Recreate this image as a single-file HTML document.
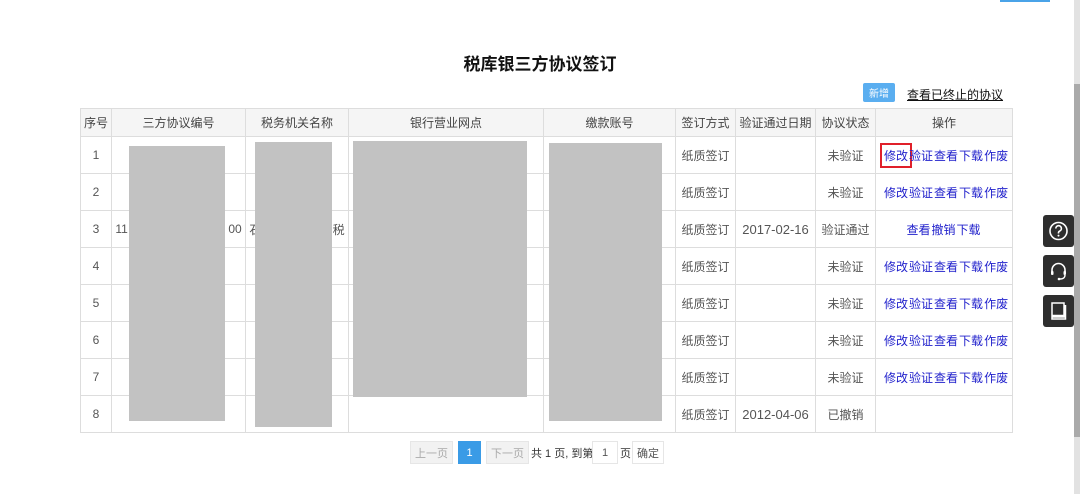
<!DOCTYPE html>
<html><head><meta charset="utf-8"><style>
*{margin:0;padding:0;box-sizing:border-box}
body{width:1080px;height:494px;background:#fff;position:relative;overflow:hidden;font-family:"Liberation Sans","Noto Sans CJK SC",sans-serif;font-size:12px;color:#555}
.a{position:absolute}
table{position:absolute;left:80px;top:108px;border-collapse:collapse;table-layout:fixed;width:932px}
td,th{border:1px solid #ddd;text-align:center;height:37px;font-weight:normal;color:#555;font-size:12px;white-space:nowrap;overflow:hidden}
th{background:#f5f5f5;height:28px;color:#444}
td.op{color:#2222cc;font-size:12px;text-align:left;padding-left:8px}
td.op span{display:inline-block;margin-right:1px}
.g{position:absolute;background:#c2c2c2}
.ic{position:absolute;left:1043px;width:31px;height:32px;background:#2e2e2e;border-radius:3px}
.pb{position:absolute;top:441px;height:23px;border:1px solid #e6e6e6;background:#f2f2f2;color:#aaa;font-size:11px;display:flex;align-items:center;justify-content:center}
.pt{position:absolute;top:441px;height:23px;font-size:11px;color:#333;display:flex;align-items:center}
</style></head><body>
<div class="a" style="left:1000px;top:0;width:50px;height:2px;background:#4aa3e8"></div>
<div class="a" style="left:1074px;top:0;width:6px;height:494px;background:#e2e2e2"></div>
<div class="a" style="left:1074px;top:84px;width:6px;height:353px;background:#aaa"></div>
<div class="a" style="left:0;top:50px;width:1080px;text-align:center;font-size:17px;font-weight:bold;color:#111">税库银三方协议签订</div>
<div class="a" style="left:863px;top:83px;width:32px;height:19px;background:#5aaef0;color:#fff;font-size:10px;display:flex;align-items:center;justify-content:center;border-radius:2px">新增</div>
<div class="a" style="left:907px;top:86px;font-size:12px;color:#111;text-decoration:underline">查看已终止的协议</div>
<table>
<colgroup><col style="width:31px"><col style="width:134px"><col style="width:103px"><col style="width:195px"><col style="width:132px"><col style="width:60px"><col style="width:80px"><col style="width:60px"><col style="width:137px"></colgroup>
<tr><th>序号</th><th>三方协议编号</th><th>税务机关名称</th><th>银行营业网点</th><th>缴款账号</th><th>签订方式</th><th>验证通过日期</th><th>协议状态</th><th>操作</th></tr>
<tr><td>1</td><td></td><td></td><td></td><td></td><td>纸质签订</td><td></td><td>未验证</td><td class="op"><span style="outline:2px solid #e0202a;outline-offset:2px">修改</span><span>验证</span><span>查看</span><span>下载</span><span>作废</span></td></tr>
<tr><td>2</td><td></td><td></td><td></td><td></td><td>纸质签订</td><td></td><td>未验证</td><td class="op"><span>修改</span><span>验证</span><span>查看</span><span>下载</span><span>作废</span></td></tr>
<tr><td>3</td><td style="text-align:left">&nbsp;11<span style="float:right">00&nbsp;</span></td><td style="text-align:left">&nbsp;石<span style="float:right">税&nbsp;</span></td><td></td><td></td><td>纸质签订</td><td style="font-size:13px">2017-02-16</td><td>验证通过</td><td class="op" style="text-align:center;padding:0"><span>查看</span><span>撤销</span><span>下载</span></td></tr>
<tr><td>4</td><td></td><td></td><td></td><td></td><td>纸质签订</td><td></td><td>未验证</td><td class="op"><span>修改</span><span>验证</span><span>查看</span><span>下载</span><span>作废</span></td></tr>
<tr><td>5</td><td></td><td></td><td></td><td></td><td>纸质签订</td><td></td><td>未验证</td><td class="op"><span>修改</span><span>验证</span><span>查看</span><span>下载</span><span>作废</span></td></tr>
<tr><td>6</td><td></td><td></td><td></td><td></td><td>纸质签订</td><td></td><td>未验证</td><td class="op"><span>修改</span><span>验证</span><span>查看</span><span>下载</span><span>作废</span></td></tr>
<tr><td>7</td><td></td><td></td><td></td><td></td><td>纸质签订</td><td></td><td>未验证</td><td class="op"><span>修改</span><span>验证</span><span>查看</span><span>下载</span><span>作废</span></td></tr>
<tr><td>8</td><td></td><td></td><td></td><td></td><td>纸质签订</td><td style="font-size:13px">2012-04-06</td><td>已撤销</td><td></td></tr>
</table>
<div class="g" style="left:129px;top:146px;width:96px;height:275px"></div>
<div class="g" style="left:255px;top:142px;width:77px;height:285px"></div>
<div class="g" style="left:353px;top:141px;width:174px;height:256px"></div>
<div class="g" style="left:549px;top:143px;width:113px;height:278px"></div>
<div class="pb" style="left:410px;width:43px">上一页</div>
<div class="pb" style="left:458px;width:23px;background:#3a9be6;border-color:#3a9be6;color:#fff">1</div>
<div class="pb" style="left:486px;width:43px">下一页</div>
<div class="pt" style="left:531px">共 1 页, 到第</div>
<div class="pb" style="left:592px;width:26px;background:#fff;color:#555">1</div>
<div class="pt" style="left:620px">页</div>
<div class="pb" style="left:632px;width:32px;background:#fff;color:#555">确定</div>
<div class="ic" style="top:215px"><svg width="31" height="32" viewBox="0 0 31 32"><circle cx="15.5" cy="16" r="8.5" fill="none" stroke="#fff" stroke-width="1.6"/><path d="M12.8 13.5a2.8 2.8 0 1 1 3.8 2.6c-.8.4-1.1 1-1.1 1.8v.6" fill="none" stroke="#fff" stroke-width="1.6"/><circle cx="15.5" cy="20.6" r="1" fill="#fff"/></svg></div>
<div class="ic" style="top:255px"><svg width="31" height="32" viewBox="0 0 31 32"><path d="M9 18v-3a6.5 6.5 0 0 1 13 0v3" fill="none" stroke="#fff" stroke-width="1.6"/><rect x="8" y="16" width="2.5" height="4" rx="1" fill="#fff"/><rect x="20.5" y="16" width="2.5" height="4" rx="1" fill="#fff"/><path d="M22 20c0 3-2.5 4-5 4" fill="none" stroke="#fff" stroke-width="1.4"/><circle cx="16" cy="24" r="1.3" fill="#fff"/></svg></div>
<div class="ic" style="top:295px"><svg width="31" height="32" viewBox="0 0 31 32"><path d="M9 8h12v14H9zM9 20.5h12M9 22v2h13.5V10" fill="none" stroke="#fff" stroke-width="1.5"/></svg></div>
</body></html>
